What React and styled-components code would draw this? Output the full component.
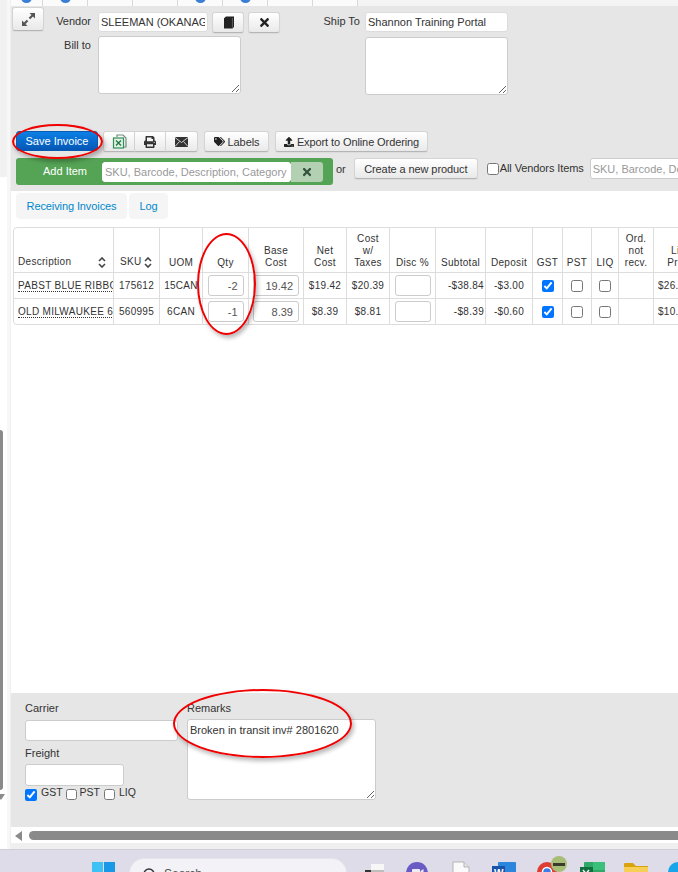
import React from "react";
import styled, { createGlobalStyle } from "styled-components";
import { FaTimes, FaPrint, FaTags, FaUpload } from "react-icons/fa";

const Global = createGlobalStyle`
  html, body { margin: 0; padding: 0; background: #fff; overflow: hidden; }
  * { box-sizing: border-box; }
  body { font-family: "Liberation Sans", Arial, sans-serif; font-size: 11px; color: #333; }
  input, textarea, button { font-family: inherit; }
`;

const Page = styled.div`
  position: relative;
  width: 678px;
  height: 872px;
  overflow: hidden;
  display: flex;
  flex-direction: column;
`;
const Screen = styled.div`
  display: flex;
  height: 849px;
  flex: none;
`;

// left rail, a sliver of the neighbouring nav
const Rail = styled.div`
  width: 11px;
  flex: none;
  display: flex;
  flex-direction: column;
  border-right: 1px solid #f0f0f0;
  background: #fff;
`;
const RailTop = styled.div`
  height: 177px;
  flex: none;
  background: #f1f1f1;
  border-right: 3px solid #f7f7f7;
`;
const RailTrack = styled.div`
  flex: 1;
  display: flex;
  flex-direction: column;
  padding-top: 253px;
  border-right: 3px solid #f7f7f7;
`;
const RailThumb = styled.div`
  width: 3px;
  height: 360px;
  flex: none;
  background: #8a8a8a;
  border-radius: 0 3px 3px 0;
`;
const RailArrow = styled.div`
  width: 0;
  height: 0;
  margin-top: 4px;
  border-left: 4px solid transparent;
  border-right: 4px solid transparent;
  border-top: 6px solid #8a8a8a;
  margin-left: -3px;
`;

const Main = styled.div`
  flex: 1;
  min-width: 0;
  display: flex;
  flex-direction: column;
  overflow: hidden;
`;

const TabStrip = styled.div`
  height: 6px;
  flex: none;
  display: flex;
  background: #f4f4f4;
  overflow: hidden;
`;
const StripTab = styled.div`
  width: 45px;
  flex: none;
  height: 6px;
  background: #fbfbfb;
  border-right: 1px solid #d8d8d8;
  display: flex;
  justify-content: center;
  &:first-child { width: 32px; }
`;
const StripDot = styled.div`
  width: 11px;
  height: 11px;
  margin-top: -8px;
  border-radius: 50%;
  background: #3a7fd5;
`;

const HeaderPanel = styled.div`
  height: 185px;
  flex: none;
  background: #e6e6e6;
  padding: 1px 0 0 1px;
`;
const FormRow = styled.div`
  display: flex;
  align-items: flex-start;
  height: 87px;
`;
const Btn = styled.button`
  display: inline-flex;
  align-items: center;
  justify-content: center;
  gap: 3px;
  height: ${(p) => p.$h || 21}px;
  width: ${(p) => (p.$w ? p.$w + "px" : "auto")};
  padding: 0;
  flex: none;
  font-size: 11px;
  letter-spacing: -0.1px;
  color: #333;
  background: linear-gradient(#ffffff, #e9e9e9);
  border: 1px solid #d4d4d4;
  border-bottom-color: #b5b5b5;
  border-radius: 3px;
  box-shadow: 0 1px 1px rgba(0, 0, 0, 0.05);
`;
const VendorGrid = styled.div`
  display: grid;
  grid-template-columns: 47px auto;
  column-gap: 7px;
  row-gap: 3px;
  margin-top: 5px;
`;
const ShipGrid = styled.div`
  display: grid;
  grid-template-columns: 60px auto;
  column-gap: 5px;
  row-gap: 5px;
  margin: 5px 0 0 20px;
`;
const Label = styled.label`
  text-align: right;
  font-size: 11px;
  line-height: 18px;
  color: #333;
`;
const InlineGroup = styled.div`
  display: flex;
  gap: 4px;
`;
const TextField = styled.input`
  display: block;
  width: ${(p) => p.$w}px;
  height: ${(p) => p.$h || 20}px;
  padding: 0 2px;
  font-size: 11px;
  color: #333;
  background: #fff;
  border: 1px solid ${(p) => p.$border || "#dcdcdc"};
  border-radius: 3px;
  outline: none;
  flex: none;
  &::placeholder { color: #999; opacity: 1; }
`;
const TextBox = styled.textarea`
  display: block;
  width: ${(p) => p.$w}px;
  height: ${(p) => p.$h}px;
  padding: 2px 2px;
  font-size: 11px;
  line-height: 16px;
  color: #333;
  background: #fff;
  border: 1px solid #ccc;
  border-radius: 3px;
  outline: none;
  margin: 0;
`;

const Toolbar = styled.div`
  display: flex;
  align-items: flex-start;
  margin: 37px 0 0 4px;
  height: 21px;
`;
const SaveBtn = styled.button`
  width: 82px;
  height: 20px;
  padding: 0;
  font-size: 11px;
  color: #fff;
  background: linear-gradient(#0b80e6, #0557b5);
  border: 1px solid #0a5cb0;
  border-radius: 3px;
  margin-right: 5px;
`;
const BtnGroup = styled.div`
  display: flex;
  margin-right: 6px;
  & > button { border-radius: 0; border-left-width: 0; }
  & > button:first-child { border-radius: 3px 0 0 3px; border-left-width: 1px; }
  & > button:last-child { border-radius: 0 3px 3px 0; }
`;
const ToolBtn = styled(Btn)`
  margin-right: 6px;
`;

const AddRow = styled.div`
  display: flex;
  align-items: flex-start;
  margin: 6px 0 0 4px;
`;
const AddBar = styled.div`
  width: 317px;
  height: 27px;
  flex: none;
  display: flex;
  align-items: center;
  background: #55a456;
  border-radius: 3px;
  padding-left: 86px;
  position: relative;
`;
const AddLabel = styled.span`
  position: absolute;
  left: 27px;
  top: 7px;
  color: #fff;
  font-size: 11px;
`;
const AddClear = styled.div`
  width: 32px;
  height: 20px;
  flex: none;
  display: flex;
  align-items: center;
  justify-content: center;
  background: #b3d0b3;
  color: #34523a;
  font-size: 11px;
  border-radius: 0 3px 3px 0;
`;
const OrText = styled.span`
  margin: 5px 8px 0 3px;
  line-height: 13px;
`;
const AllVendors = styled.label`
  display: flex;
  align-items: flex-start;
  gap: 1px;
  margin: 4px 6px 0 9px;
  line-height: 12px;
  letter-spacing: -0.1px;
  white-space: nowrap;
`;
const Check = styled.input.attrs({ type: "checkbox" })`
  width: ${(p) => p.$size || 12}px;
  height: ${(p) => p.$size || 12}px;
  margin: ${(p) => p.$m || 0};
  flex: none;
  vertical-align: middle;
`;

const Content = styled.div`
  height: 502px;
  flex: none;
  background: #fff;
  padding: 2px 0 0 2px;
  overflow: hidden;
`;
const Tabs = styled.div`
  display: flex;
  gap: 2px;
  margin-left: 3px;
  height: 26px;
`;
const TabLink = styled.a`
  display: flex;
  align-items: center;
  justify-content: center;
  width: ${(p) => p.$w}px;
  background: #f5f5f5;
  border-radius: 4px;
  color: #0088cc;
  font-size: 11px;
  letter-spacing: -0.1px;
`;
const Table = styled.table`
  margin-top: 8px;
  width: 693px;
  table-layout: fixed;
  border-collapse: separate;
  border-spacing: 0;
  border: 1px solid #ddd;
  border-radius: 4px 0 0 4px;
  font-size: 10px;
`;
const Th = styled.th`
  height: 45px;
  padding: 2px 1px 3px;
  font-weight: 400;
  font-size: 10px;
  line-height: 12px;
  letter-spacing: 0.3px;
  color: #333;
  text-align: center;
  vertical-align: bottom;
  border-left: 1px solid #ddd;
  border-bottom: 1px solid #ddd;
  &:first-child { border-left: 0; }
`;
const SortTh = styled(Th)`
  text-align: left;
  padding: 0 7px 4px ${(p) => p.$pl || 4}px;
`;
const SortInner = styled.span`
  display: flex;
  align-items: center;
  justify-content: space-between;
`;
const Td = styled.td`
  height: 26px;
  padding: 0 1px 0 ${(p) => p.$padLeft ?? 1}px;
  text-align: ${(p) => p.$align || "center"};
  vertical-align: middle;
  white-space: nowrap;
  overflow: hidden;
  font-size: 10px;
  letter-spacing: 0.3px;
  color: #333;
  border-left: 1px solid #ddd;
  border-bottom: 1px solid #ddd;
  &:first-child { border-left: 0; }
  tr:last-child & { border-bottom: 0; height: 25px; }
`;
const ProductLink = styled.span`
  border-bottom: 1px dotted #333;
  margin-left: 3px;
`;
const CellField = styled.input`
  display: block;
  width: ${(p) => p.$w}px;
  height: 21px;
  margin: 0 auto;
  padding: 0 5px;
  text-align: right;
  font-size: 11px;
  color: #555;
  background: #fff;
  border: 1px solid #ccc;
  border-radius: 3px;
  outline: none;
`;

const FooterPanel = styled.div`
  height: 134px;
  flex: none;
  display: flex;
  background: #e6e6e6;
  padding: 9px 0 0 14px;
`;
const FooterLeft = styled.div`
  width: 162px;
  flex: none;
`;
const FieldLabel = styled.div`
  font-size: 11px;
  line-height: 13px;
  margin-bottom: ${(p) => p.$mb || 5}px;
  margin-top: ${(p) => p.$mt || 0}px;
`;
const TaxRow = styled.div`
  display: flex;
  align-items: flex-start;
  margin-top: 1px;
  line-height: 12px;
  font-size: 10.5px;
`;
const TaxName = styled.span`
  margin: -1px ${(p) => p.$mr || 4}px 0 ${(p) => p.$ml || 4}px;
`;

const ScrollRow = styled.div`
  height: 15px;
  margin-top: 1px;
  flex: none;
  display: flex;
  align-items: center;
  background: #fff;
`;
const ScrollArrow = styled.div`
  width: 0;
  height: 0;
  margin: 0 7px 0 4px;
  border-top: 5px solid transparent;
  border-bottom: 5px solid transparent;
  border-right: 7px solid #8a8a8a;
`;
const ScrollThumb = styled.div`
  flex: 1;
  height: 9px;
  background: #8a8a8a;
  border-radius: 5px 0 0 5px;
`;
const ScrollFoot = styled.div`
  height: 6px;
  flex: none;
  background: #efefef;
`;

const Taskbar = styled.div`
  height: 23px;
  flex: none;
  display: flex;
  align-items: flex-start;
  overflow: hidden;
  background: #dedce8;
  border-top: 1px solid #cfcfd6;
  padding-left: 92px;
`;
const TaskIcon = styled.svg`
  flex: none;
  margin-left: ${(p) => p.$ml || 0}px;
  margin-top: ${(p) => p.$mt || 0}px;
`;
const SearchPill = styled.div`
  width: 218px;
  height: 30px;
  flex: none;
  margin: 8px 0 0 14px;
  display: flex;
  align-items: flex-start;
  gap: 7px;
  padding: 8px 0 0 12px;
  background: #f3f2f7;
  border: 1px solid #e6e5ec;
  border-radius: 15px;
  font-size: 12px;
  color: #555;
`;

// hand drawn red rings on the screenshot
const Ring = styled.div`
  position: absolute;
  left: ${(p) => p.$x}px;
  top: ${(p) => p.$y}px;
  width: ${(p) => p.$w}px;
  height: ${(p) => p.$h}px;
  border: 2px solid #f00000;
  border-radius: 50%;
  box-shadow: 2px 3px 4px rgba(0, 0, 0, 0.28);
  pointer-events: none;
`;

const ExpandIcon = () => (
  <svg width="15" height="15" viewBox="0 0 15 15">
    <path d="M8.5 1H14v5.5l-2-2-2.8 2.8-1.5-1.5L10.5 3zM6.5 14H1V8.5l2 2 2.8-2.8 1.5 1.5L4.5 12z" fill="#555" />
  </svg>
);
const BookIcon = () => (
  <svg width="11" height="13" viewBox="0 0 11 13">
    <path d="M1 2.2L3 .5h8v10.3L9.6 12.5H1z" fill="#222" />
    <path d="M9.4 2v9.5" stroke="#777" strokeWidth="0.8" />
  </svg>
);
const MailIcon = () => (
  <svg width="13" height="10" viewBox="0 0 13 10">
    <rect x="0" y="0" width="13" height="10" fill="#333" />
    <path d="M0 .5l6.5 5 6.5-5M0 9.5l4.5-5M13 9.5l-4.5-5" fill="none" stroke="#ddd" strokeWidth="0.9" />
  </svg>
);
const SortIcon = () => (
  <svg width="8" height="11" viewBox="0 0 8 11">
    <path d="M1 4l3-3 3 3M1 7l3 3 3-3" fill="none" stroke="#444" strokeWidth="1.6" />
  </svg>
);
const ExcelIcon = () => (
  <svg width="15" height="15" viewBox="0 0 15 15">
    <path d="M5 3V1h6l3 3v9h-3" fill="none" stroke="#6f8f7f" strokeWidth="1.2" />
    <rect x="1.5" y="4" width="10" height="10" fill="#e4f0e6" stroke="#2e9158" strokeWidth="1.2" />
    <path d="M4 6.5l5 5M9 6.5l-5 5" stroke="#1f7a45" strokeWidth="1.4" />
  </svg>
);

const Rows = [
  { name: "PABST BLUE RIBBON 15", sku: "175612", uom: "15CAN", qty: "-2", base: "19.42", net: "$19.42", tax: "$20.39", sub: "-$38.84", dep: "-$3.00", price: "$26.99" },
  { name: "OLD MILWAUKEE 6 PACK", sku: "560995", uom: "6CAN", qty: "-1", base: "8.39", net: "$8.39", tax: "$8.81", sub: "-$8.39", dep: "-$0.60", price: "$10.99" },
];
const colWidths = [99, 46, 43, 46, 55, 43, 43, 46, 50, 47, 30, 29, 27, 35, 52];
const stripTabs = [true, true, false, false, true, true, false, false];

export default function App() {
  return (
    <Page>
      <Global />
      <Screen>
        <Rail>
          <RailTop />
          <RailTrack>
            <RailThumb />
            <RailArrow />
          </RailTrack>
        </Rail>
        <Main>
          <TabStrip>
            {stripTabs.map((dot, i) => (
              <StripTab key={i}>{dot && <StripDot />}</StripTab>
            ))}
          </TabStrip>

          <HeaderPanel>
            <FormRow>
              <Btn $w={32} $h={24}><ExpandIcon /></Btn>
              <VendorGrid>
                <Label>Vendor</Label>
                <InlineGroup>
                  <TextField $w={110} defaultValue="SLEEMAN (OKANAGAN)" />
                  <Btn $w={32}><BookIcon /></Btn>
                  <Btn $w={32}><FaTimes size={13} color="#222" /></Btn>
                </InlineGroup>
                <Label>Bill to</Label>
                <TextBox $w={143} $h={58} />
              </VendorGrid>
              <ShipGrid>
                <Label>Ship To</Label>
                <TextField $w={143} $h={20} defaultValue="Shannon Training Portal" />
                <span />
                <TextBox $w={143} $h={58} />
              </ShipGrid>
            </FormRow>

            <Toolbar>
              <SaveBtn>Save Invoice</SaveBtn>
              <BtnGroup>
                <Btn $w={32}><ExcelIcon /></Btn>
                <Btn $w={31}><FaPrint size={12} color="#333" /></Btn>
                <Btn $w={32}><MailIcon /></Btn>
              </BtnGroup>
              <ToolBtn $w={65}><FaTags size={11} color="#222" />Labels</ToolBtn>
              <ToolBtn $w={153}><FaUpload size={10} color="#222" />Export to Online Ordering</ToolBtn>
            </Toolbar>

            <AddRow>
              <AddBar>
                <AddLabel>Add Item</AddLabel>
                <TextField $w={189} $h={20} $border="#fff" placeholder="SKU, Barcode, Description, Category" />
                <AddClear><FaTimes size={12} /></AddClear>
              </AddBar>
              <OrText>or</OrText>
              <Btn $w={124}>Create a new product</Btn>
              <AllVendors><Check $m="1px 0 0 0" />All Vendors Items</AllVendors>
              <TextField $w={160} $h={21} $border="#ccc" placeholder="SKU, Barcode, Description" />
            </AddRow>
          </HeaderPanel>

          <Content>
            <Tabs>
              <TabLink $w={111}>Receiving Invoices</TabLink>
              <TabLink $w={39}>Log</TabLink>
            </Tabs>
            <Table>
              <colgroup>
                {colWidths.map((w, i) => <col key={i} style={{ width: w }} />)}
              </colgroup>
              <thead>
                <tr>
                  <SortTh><SortInner>Description<SortIcon /></SortInner></SortTh>
                  <SortTh $pl={6}><SortInner>SKU<SortIcon /></SortInner></SortTh>
                  <Th>UOM</Th>
                  <Th>Qty</Th>
                  <Th>Base<br />Cost</Th>
                  <Th>Net<br />Cost</Th>
                  <Th>Cost<br />w/<br />Taxes</Th>
                  <Th>Disc %</Th>
                  <Th>Subtotal</Th>
                  <Th>Deposit</Th>
                  <Th>GST</Th>
                  <Th>PST</Th>
                  <Th>LIQ</Th>
                  <Th>Ord.<br />not<br />recv.</Th>
                  <Th>List<br />Price</Th>
                </tr>
              </thead>
              <tbody>
                {Rows.map((r) => (
                  <tr key={r.sku}>
                    <Td $align="left"><ProductLink>{r.name}</ProductLink></Td>
                    <Td>{r.sku}</Td>
                    <Td>{r.uom}</Td>
                    <Td><CellField $w={36} defaultValue={r.qty} /></Td>
                    <Td><CellField $w={46} defaultValue={r.base} /></Td>
                    <Td>{r.net}</Td>
                    <Td>{r.tax}</Td>
                    <Td><CellField $w={36} /></Td>
                    <Td $align="right">{r.sub}</Td>
                    <Td>{r.dep}</Td>
                    <Td><Check defaultChecked /></Td>
                    <Td><Check /></Td>
                    <Td><Check /></Td>
                    <Td />
                    <Td $align="left" $padLeft={4}>{r.price}</Td>
                  </tr>
                ))}
              </tbody>
            </Table>
          </Content>

          <FooterPanel>
            <FooterLeft>
              <FieldLabel>Carrier</FieldLabel>
              <TextField $w={153} $h={21} $border="#ccc" />
              <FieldLabel $mt={6} $mb={4}>Freight</FieldLabel>
              <TextField $w={99} $h={22} $border="#ccc" />
              <TaxRow>
                <Check defaultChecked $m="2px 0 0 0" />
                <TaxName $mr={3}>GST</TaxName>
                <Check $size={11} $m="2px 0 0 0" />
                <TaxName $ml={3}>PST</TaxName>
                <Check $size={11} $m="2px 0 0 0" />
                <TaxName>LIQ</TaxName>
              </TaxRow>
            </FooterLeft>
            <div>
              <FieldLabel $mb={4}>Remarks</FieldLabel>
              <TextBox $w={189} $h={81} defaultValue="Broken in transit inv# 2801620" />
            </div>
          </FooterPanel>

          <ScrollRow>
            <ScrollArrow />
            <ScrollThumb />
          </ScrollRow>
          <ScrollFoot />
        </Main>
      </Screen>

      <Taskbar>
        <TaskIcon width="23" height="23" viewBox="0 0 23 23" $mt={12}>
          <rect x="0" y="0" width="11" height="11" fill="#3ec1f5" />
          <rect x="12" y="0" width="11" height="11" fill="#1a98e8" />
          <rect x="0" y="12" width="11" height="11" fill="#1a98e8" />
          <rect x="12" y="12" width="11" height="11" fill="#0f78d4" />
        </TaskIcon>
        <SearchPill>
          <svg width="15" height="15" viewBox="0 0 15 15">
            <circle cx="7" cy="7" r="5" fill="none" stroke="#333" strokeWidth="1.5" />
          </svg>
          Search
        </SearchPill>
        <TaskIcon width="20" height="20" viewBox="0 0 20 20" $ml={18} $mt={14}>
          <rect x="0" y="6" width="12" height="14" fill="#333" />
          <rect x="6" y="0" width="13" height="13" fill="#f7f7f7" />
          <rect x="6" y="6" width="13" height="7" fill="#bdbdbd" />
        </TaskIcon>
        <TaskIcon width="22" height="22" viewBox="0 0 22 22" $ml={21} $mt={12}>
          <circle cx="11" cy="11" r="11" fill="#6a5bc4" />
          <rect x="6" y="7" width="8" height="7" rx="1" fill="#efeaf9" />
          <path d="M14.5 9l3-2v7l-3-2z" fill="#efeaf9" />
        </TaskIcon>
        <TaskIcon width="18" height="22" viewBox="0 0 18 22" $ml={24} $mt={11}>
          <path d="M1 1h11l5 5v16H1z" fill="#fafafa" stroke="#b5b5b5" />
          <path d="M12 1v5h5" fill="#e4e4e4" stroke="#b5b5b5" />
        </TaskIcon>
        <TaskIcon width="24" height="22" viewBox="0 0 24 22" $ml={22} $mt={12}>
          <rect x="6" y="0" width="18" height="22" rx="1" fill="#2b87dd" />
          <rect x="0" y="4" width="13" height="14" fill="#1a52a8" />
          <text x="2" y="15" fontSize="10" fontFamily="Liberation Sans" fontWeight="700" fill="#fff">W</text>
        </TaskIcon>
        <TaskIcon width="30" height="24" viewBox="0 0 30 24" $ml={21} $mt={6}>
          <circle cx="10" cy="16" r="10" fill="#dc3f32" />
          <path d="M10 16L1 21a10 10 0 0 0 9 5z" fill="#3aa655" />
          <circle cx="10" cy="16" r="4.5" fill="#3d7de8" stroke="#fff" strokeWidth="1.5" />
          <circle cx="22" cy="8" r="8" fill="#a8bd78" />
          <rect x="16" y="7" width="12" height="3" fill="#3a3a2e" />
        </TaskIcon>
        <TaskIcon width="25" height="22" viewBox="0 0 25 22" $ml={13} $mt={12}>
          <rect x="4" y="0" width="21" height="22" rx="1" fill="#2fa868" />
          <rect x="13" y="0" width="12" height="8" fill="#3bc07c" />
          <rect x="0" y="5" width="13" height="13" fill="#107040" />
          <path d="M3 8l6 7M9 8l-6 7" stroke="#fff" strokeWidth="1.4" />
        </TaskIcon>
        <TaskIcon width="24" height="20" viewBox="0 0 24 20" $ml={19} $mt={12}>
          <path d="M0 2a1 1 0 0 1 1-1h8l3 3h12v16H0z" fill="#d9a30f" />
          <rect x="0" y="5" width="24" height="15" fill="#f7cf57" />
        </TaskIcon>
        <TaskIcon width="20" height="20" viewBox="0 0 20 20" $ml={20} $mt={12}>
          <circle cx="10" cy="10" r="10" fill="#18a5ea" />
        </TaskIcon>
      </Taskbar>

      <Ring $x={12} $y={124} $w={91} $h={35} />
      <Ring $x={197} $y={233} $w={59} $h={102} />
      <Ring $x={173} $y={689} $w={179} $h={69} />
    </Page>
  );
}
